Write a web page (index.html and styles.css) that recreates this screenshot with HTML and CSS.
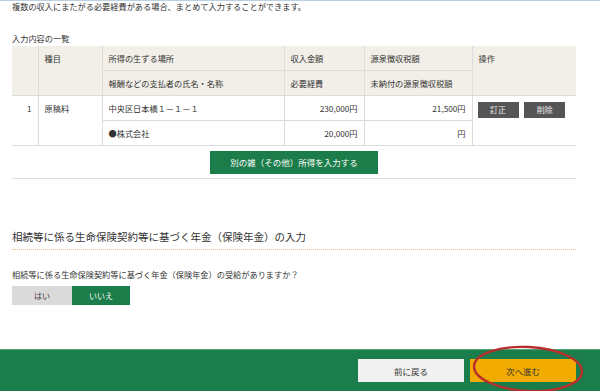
FILE: index.html
```html
<!DOCTYPE html>
<html lang="ja">
<head>
  <meta charset="UTF-8">
  <title>雑所得の入力</title>
  <link rel="stylesheet" href="styles.css">
</head>
<body>

<div class="page">
  <p class="intro">複数の収入にまたがる必要経費がある場合、まとめて入力することができます。</p>

  <div class="list-title">入力内容の一覧</div>
  <table class="entry-table">
    <colgroup>
      <col style="width:26px">
      <col style="width:64px">
      <col style="width:182px">
      <col style="width:80px">
      <col style="width:108px">
      <col style="width:104px">
    </colgroup>
    <tr class="head">
      <th rowspan="2"></th>
      <th rowspan="2">種目</th>
      <th>所得の生ずる場所</th>
      <th>収入金額</th>
      <th>源泉徴収税額</th>
      <th rowspan="2">操作</th>
    </tr>
    <tr class="head">
      <th>報酬などの支払者の氏名・名称</th>
      <th>必要経費</th>
      <th>未納付の源泉徴収税額</th>
    </tr>
    <tr>
      <td rowspan="2" class="num">1</td>
      <td rowspan="2">原稿料</td>
      <td>中央区日本橋１－１－１</td>
      <td class="amount">230,000円</td>
      <td class="amount">21,500円</td>
      <td rowspan="2" class="ops">
        <button class="small-btn">訂正</button>
        <button class="small-btn">削除</button>
      </td>
    </tr>
    <tr>
      <td>●株式会社</td>
      <td class="amount">20,000円</td>
      <td class="amount">円</td>
    </tr>
  </table>

  <div class="add-row">
    <button class="add-button">別の雑（その他）所得を入力する</button>
  </div>

  <h2 class="section-title">相続等に係る生命保険契約等に基づく年金（保険年金）の入力</h2>
  <p class="question">相続等に係る生命保険契約等に基づく年金（保険年金）の受給がありますか？</p>
  <div class="choice">
    <button class="choice-btn">はい</button>
    <button class="choice-btn selected">いいえ</button>
  </div>
</div>

<div class="footer">
  <button class="back-button">前に戻る</button>
  <button class="next-button">次へ進む</button>
  <svg class="mark" width="116" height="54" viewBox="0 0 116 54">
    <ellipse cx="58" cy="27" rx="54" ry="22" transform="rotate(3 58 27)" fill="none" stroke="#b82e2c" stroke-width="2.4"/>
  </svg>
</div>

</body>
</html>
```

FILE: styles.css
```css
body {
  margin: 0;
  padding: 0;
  width: 600px;
  height: 391px;
  overflow: hidden;
  display: flex;
  flex-direction: column;
  font-family: "Noto Sans CJK JP", "Noto Sans", sans-serif;
  font-size: 8.2px;
  color: #333;
  background: #fff;
}

button {
  font-family: inherit;
  border: none;
  cursor: pointer;
  padding: 0;
}

.page {
  border-top: 1px solid #bcd0e4;
  padding: 0 24px 0 12px;
}

.intro {
  margin: 0;
  line-height: 11px;
}

.list-title {
  margin-top: 20px;
  line-height: 12px;
  margin-bottom: 2px;
}

/* Table */
.entry-table {
  width: 564px;
  border-collapse: collapse;
  table-layout: fixed;
}

.entry-table th,
.entry-table td {
  padding: 0 6px;
  text-align: left;
  font-weight: normal;
  vertical-align: top;
  border: 1px solid #dcdcdc;
  white-space: nowrap;
}

.entry-table th:first-child,
.entry-table td:first-child {
  border-left: none;
}

.entry-table th:last-child,
.entry-table td:last-child {
  border-right: none;
}

.entry-table tr.head th {
  background: #f1efe8;
  border-top: none;
  height: 24px;
  line-height: 24px;
}

.entry-table td {
  height: 24px;
  line-height: 24px;
}

.entry-table td.num,
.entry-table td.amount {
  text-align: right;
}

.entry-table td.ops {
  padding: 5px 0 0 5px;
  line-height: 16px;
}

.small-btn {
  width: 41px;
  height: 16px;
  margin-right: 4px;
  background: #555;
  color: #eee;
  font-size: 8px;
}

.add-row {
  height: 32px;
  display: flex;
  justify-content: center;
  align-items: center;
  border-bottom: 1px solid #dcdcdc;
  width: 564px;
}

.add-button {
  width: 168px;
  height: 23px;
  background: #1c7d4a;
  color: #fff;
  font-size: 8.5px;
}

/* Pension section */
.section-title {
  margin: 50px 0 0;
  font-size: 10.5px;
  font-weight: normal;
  line-height: 16px;
  padding-bottom: 4px;
  border-bottom: 1px dotted #e2c07e;
  width: 564px;
}

.question {
  margin: 18px 0 0;
  line-height: 12px;
}

.choice {
  display: flex;
  margin-top: 6px;
}

.choice-btn {
  width: 60px;
  height: 19px;
  background: #dadada;
  color: #444;
  font-size: 8px;
}

.choice-btn.selected {
  width: 58px;
  background: #1c7d4a;
  color: #fff;
}

/* Footer */
.footer {
  margin-top: auto;
  height: 42px;
  background: #1b7d4b;
  border-top: 1px solid #4fa676;
  display: flex;
  justify-content: flex-end;
  align-items: flex-start;
  padding: 9px 24px 0 0;
  box-sizing: border-box;
  position: relative;
}

.back-button,
.next-button {
  width: 106px;
  height: 23px;
  font-size: 8.5px;
  color: #333;
}

.back-button {
  background: #f1f1f1;
}

.next-button {
  margin-left: 6px;
  background: #f2ab00;
}

.mark {
  position: absolute;
  left: 470px;
  top: -8px;
}
```
